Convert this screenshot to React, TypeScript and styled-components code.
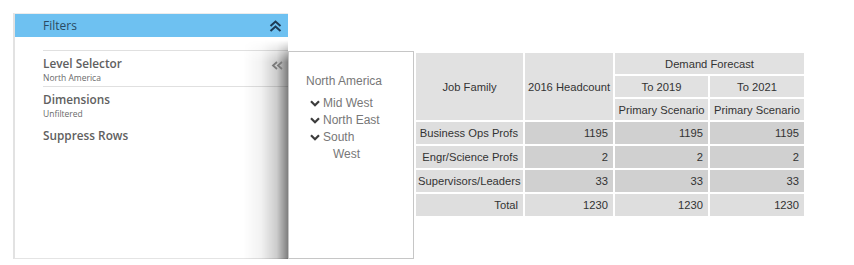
import styled, { createGlobalStyle } from "styled-components"

const GlobalStyle = createGlobalStyle`
    html, body {
        margin: 0;
        padding: 0;
        background: #ffffff;
    }
`

const Page = styled.div`
    display: flex;
    align-items: flex-start;
    padding: 13px 0 0 13px;
    width: 854px;
    height: 265px;
    box-sizing: border-box;
`

const Sidebar = styled.div`
    width: 275px;
    height: 246px;
    box-sizing: border-box;
    border-left: 2px solid #e2e2e2;
    border-top: 1px solid #ececec;
    border-bottom: 1px solid #e4e4e4;
    background: #fff;
    font-family: "Open Sans", "Noto Sans", sans-serif;
`

const SidebarHeader = styled.div`
    display: flex;
    align-items: center;
    justify-content: space-between;
    height: 23px;
    padding: 0 6px 0 28px;
    background: #6ec1f1;
    color: #2b4a62;
    font-size: 12px;
`

const SidebarBody = styled.div`
    display: flex;
    flex-direction: column;
    padding: 13px 0 0 28px;
`

const Section = styled.div<{ $divider?: boolean }>`
    display: flex;
    align-items: flex-start;
    justify-content: space-between;
    border-top: ${(p) => (p.$divider ? "1px solid #e0e0e0" : "none")};
    padding: ${(p) => (p.$divider ? "4px" : "5px")} 4px 2px 0;
`

const SectionText = styled.div`
    display: flex;
    flex-direction: column;
`

const SectionTitle = styled.div`
    font-size: 11.8px;
    font-weight: 600;
    color: #606060;
    line-height: 16px;
`

const SectionSub = styled.div`
    font-size: 8.5px;
    color: #6a6a6a;
    line-height: 13px;
`

const CollapseIcon = styled.svg`
    position: relative;
    z-index: 2;
    margin-top: 6px;
`

const Flyout = styled.div`
    position: relative;
    z-index: 1;
    margin-top: 38px;
    width: 126px;
    height: 208px;
    box-sizing: border-box;
    border: 1px solid #c6c6c6;
    background: #fff;
    padding: 21px 0 0 17px;
    font-family: "Liberation Sans", Arial, sans-serif;
    font-size: 12px;
    color: #777;

    &::before {
        content: "";
        position: absolute;
        top: -12px;
        bottom: -1px;
        left: -46px;
        width: 45px;
        background: linear-gradient(
            to right,
            rgba(0, 0, 0, 0) 0%,
            rgba(0, 0, 0, 0.05) 40%,
            rgba(0, 0, 0, 0.2) 75%,
            rgba(0, 0, 0, 0.5) 100%
        );
        -webkit-mask-image: linear-gradient(to bottom, transparent 0, #000 22px);
        mask-image: linear-gradient(to bottom, transparent 0, #000 22px);
    }
`

const TreeRoot = styled.div`
    line-height: 17px;
    margin-bottom: 5px;
`

const TreeItem = styled.div`
    display: flex;
    align-items: flex-start;
    padding-left: 4px;
    line-height: 17px;
`

const TreeLabel = styled.span`
    width: 50px;
    padding-left: 10px;
    text-indent: -10px;
    margin-left: 3px;
`

const Chevron = styled.svg`
    flex: none;
    margin-top: 5px;
`

const Grid = styled.table`
    margin-top: 38px;
    border-spacing: 2px;
    table-layout: fixed;
    width: 392px;
    font-family: "Liberation Sans", Arial, sans-serif;
    font-size: 11.2px;
    color: #333;
`

const HeadCell = styled.th`
    background: #e1e1e1;
    font-weight: normal;
    height: 21px;
    padding: 0 2px;
    text-align: center;
    white-space: nowrap;
`

const Cell = styled.td<{ $tone: "label" | "num" | "total" }>`
    background: ${(p) => (p.$tone === "num" ? "#d0d0d0" : "#dedede")};
    height: 22px;
    padding: 0 5px 0 2px;
    text-align: right;
    white-space: nowrap;
`

const rows = [
    { name: "Business Ops Profs", values: [1195, 1195, 1195] },
    { name: "Engr/Science Profs", values: [2, 2, 2] },
    { name: "Supervisors/Leaders", values: [33, 33, 33] },
]

const DoubleUp = () => (
    <svg width="13" height="12" viewBox="0 0 13 12">
        <polyline points="1.5,6 6.5,1.5 11.5,6" fill="none" stroke="#1d3a55" strokeWidth="2" />
        <polyline points="1.5,11 6.5,6.5 11.5,11" fill="none" stroke="#1d3a55" strokeWidth="2" />
    </svg>
)

const TreeNode = ({ label }: { label: string }) => (
    <TreeItem>
        <Chevron width="10" height="7" viewBox="0 0 10 7">
            <polyline points="1,1.2 5,5.2 9,1.2" fill="none" stroke="#3c3c3c" strokeWidth="2.2" />
        </Chevron>
        <TreeLabel>{label}</TreeLabel>
    </TreeItem>
)

export default function App() {
    return (
        <>
            <GlobalStyle />
            <Page>
                <Sidebar>
                    <SidebarHeader>
                        <span>Filters</span>
                        <DoubleUp />
                    </SidebarHeader>
                    <SidebarBody>
                        <Section $divider>
                            <SectionText>
                                <SectionTitle>Level Selector</SectionTitle>
                                <SectionSub>North America</SectionSub>
                            </SectionText>
                            <CollapseIcon width="13" height="9" viewBox="0 0 13 9">
                                <polyline points="6,1 2,4.5 6,8" fill="none" stroke="#7a7a7a" strokeWidth="1.8" />
                                <polyline points="11,1 7,4.5 11,8" fill="none" stroke="#7a7a7a" strokeWidth="1.8" />
                            </CollapseIcon>
                        </Section>
                        <Section $divider>
                            <SectionText>
                                <SectionTitle>Dimensions</SectionTitle>
                                <SectionSub>Unfiltered</SectionSub>
                            </SectionText>
                        </Section>
                        <Section>
                            <SectionTitle>Suppress Rows</SectionTitle>
                        </Section>
                    </SidebarBody>
                </Sidebar>
                <Flyout>
                    <TreeRoot>North America</TreeRoot>
                    <TreeNode label="Mid West" />
                    <TreeNode label="North East" />
                    <TreeNode label="South West" />
                </Flyout>
                <Grid>
                    <colgroup>
                        <col style={{ width: 107 }} />
                        <col style={{ width: 88 }} />
                        <col style={{ width: 93 }} />
                        <col style={{ width: 94 }} />
                    </colgroup>
                    <thead>
                        <tr>
                            <HeadCell rowSpan={3}>Job Family</HeadCell>
                            <HeadCell rowSpan={3}>2016 Headcount</HeadCell>
                            <HeadCell colSpan={2}>Demand Forecast</HeadCell>
                        </tr>
                        <tr>
                            <HeadCell>To 2019</HeadCell>
                            <HeadCell>To 2021</HeadCell>
                        </tr>
                        <tr>
                            <HeadCell>Primary Scenario</HeadCell>
                            <HeadCell>Primary Scenario</HeadCell>
                        </tr>
                    </thead>
                    <tbody>
                        {rows.map((r) => (
                            <tr key={r.name}>
                                <Cell $tone="label">{r.name}</Cell>
                                {r.values.map((v, i) => (
                                    <Cell key={i} $tone="num">
                                        {v}
                                    </Cell>
                                ))}
                            </tr>
                        ))}
                        <tr>
                            <Cell $tone="total">Total</Cell>
                            <Cell $tone="total">1230</Cell>
                            <Cell $tone="total">1230</Cell>
                            <Cell $tone="total">1230</Cell>
                        </tr>
                    </tbody>
                </Grid>
            </Page>
        </>
    )
}
